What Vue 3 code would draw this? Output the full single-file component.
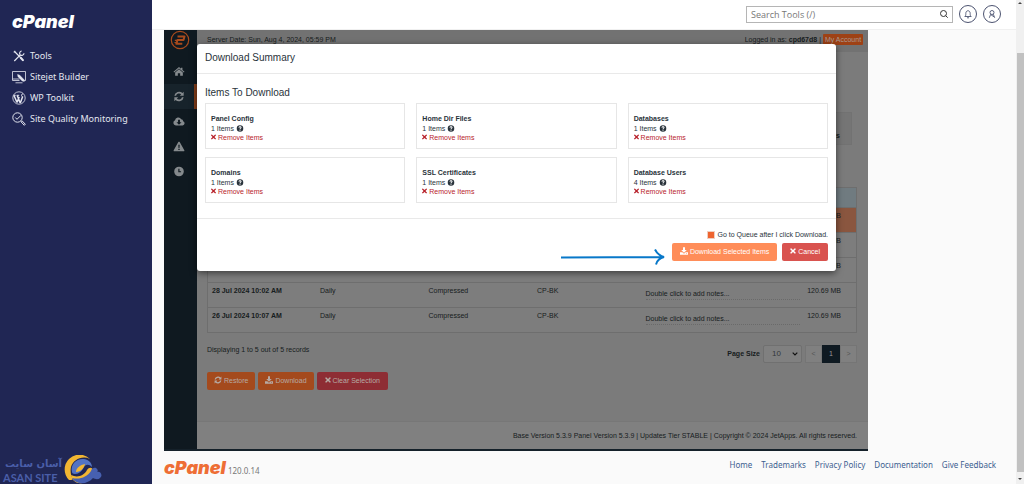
<script setup>
import { h, ref } from 'vue'

const shapes = {
  times: { box: '0 0 352 512', d: 'M242.72 256l100.07-100.07c12.28-12.28 12.28-32.19 0-44.48l-22.24-22.24c-12.28-12.28-32.19-12.28-44.48 0L176 189.28 75.93 89.21c-12.28-12.28-32.19-12.28-44.48 0L9.21 111.45c-12.28 12.28-12.28 32.19 0 44.48L109.28 256 9.21 356.07c-12.28 12.28-12.28 32.19 0 44.48l22.24 22.24c12.28 12.28 32.2 12.28 44.48 0L176 322.72l100.07 100.07c12.28 12.28 32.2 12.28 44.48 0l22.24-22.24c12.28-12.28 12.28-32.19 0-44.48L242.72 256z' },
  home: { box: '0 0 16 16', d: 'M8 1.5l2.8 2.4V2.5h2.2v3.3l3 2.6-.9 1.1L8 3.6.9 9.5 0 8.4zM8 4.7l5.6 4.7v4.9H9.7v-3.9H6.3v3.9H2.4V9.4z' },
  sync: { box: '0 0 16 16', d: 'M1.2 7A7 7 0 0 1 13 3l1.8-1.8v5.6H9.2l2-2A4.6 4.6 0 0 0 3.7 7zM14.8 9A7 7 0 0 1 3 13l-1.8 1.8V9.2h5.6l-2 2A4.6 4.6 0 0 0 12.3 9z' },
  cloud: { box: '0 0 18 16', d: 'M4.3 14A4 4 0 0 1 3 6.300A5 5 0 0 1 12.300 4.500A3.300 3.300 0 0 1 15.300 7.500A3.400 3.400 0 0 1 14.500 14zM7.600 5.500V9H5.200L9 12.800 12.800 9H10.400V5.500z' },
  warning: { box: '0 0 16 16', d: 'M8 1c.5 0 .8.2 1 .6l6.700 11.900c.5.8 0 1.500-.9 1.500H1.200c-.9 0-1.400-.7-.9-1.500L7 1.600c.2-.4.5-.6 1-.6zM7 5.500l.3 4.500h1.400L9 5.500zM7 11.200v1.900h2v-1.900z' },
  clock: { box: '0 0 16 16', d: 'M8 1a7 7 0 1 1 0 14A7 7 0 0 1 8 1zM7 4v5h4V7.500H8.700V4z' },
  help: { box: '0 0 16 16', d: 'M8 .5a7.500 7.500 0 1 1 0 15 7.500 7.500 0 0 1 0-15zM4.700 6.200h2.200c0-1.500 2.200-1.200 2.200 0 0 .9-2.200 1.300-2.200 3.500h2.200c0-1.300 2.400-1.700 2.400-3.800 0-3.700-6.800-3.900-6.800.3zM6.900 10.700V13h2.200v-2.300z' },
  download: { box: '0 0 16 16', d: 'M6 .5h4V6h3.500L8 11.500 2.500 6H6zM0 10.500h4.700L8 13.700l3.300-3.200H16v5H0zM12 12.500v1h2v-1z' },
}
const Icon = (props) =>
  h('svg', { class: 'icon', viewBox: shapes[props.name].box, 'aria-hidden': 'true' }, [
    h('path', { d: shapes[props.name].d, fill: 'currentColor', 'fill-rule': 'evenodd' }),
  ])
Icon.props = ['name']

const rail = ['home', 'sync', 'cloud', 'warning', 'clock']
const items = [
  { name: 'Panel Config', count: 1 },
  { name: 'Home Dir Files', count: 1 },
  { name: 'Databases', count: 1 },
  { name: 'Domains', count: 1 },
  { name: 'SSL Certificates', count: 1 },
  { name: 'Database Users', count: 4 },
]
const backups = [
  { selected: true },
  {},
  {},
  { date: '28 Jul 2024 10:02 AM', plan: 'Daily', kind: 'Compressed', node: 'CP-BK', notes: 'Double click to add notes...' },
  { date: '26 Jul 2024 10:07 AM', plan: 'Daily', kind: 'Compressed', node: 'CP-BK', notes: 'Double click to add notes...' },
]
const links = ['Home', 'Trademarks', 'Privacy Policy', 'Documentation', 'Give Feedback']
const goToQueue = ref(true)
</script>

<template>
  <div class="page">
    <aside class="sidebar">
      <a class="brand" href="#" aria-label="cPanel">cPanel</a>
      <nav class="menu">
        <a href="#">
          <svg viewBox="0 0 14 14" fill="none" stroke="currentColor" stroke-width="1.200">
            <path d="M2.500 2.500l6 6 3 3.300M1.800 3.300l1.500-1.500" /><path d="M8.500 8.500l2.800 3.200" stroke-width="2" />
            <path d="M2.300 12l5.500-5.700M12 4.200a2.300 2.300 0 0 1-3.900 1.500A2.300 2.300 0 0 1 9.700 2" />
          </svg>
          Tools
        </a>
        <a href="#">
          <svg viewBox="0 0 14 14" fill="none" stroke="currentColor" stroke-width=".8">
            <path d="M7.500 10.500h-7v-9h13v9H12M3.500 12.800h7M.5 9h7" />
            <path d="M5.500 4.500l2 .5 4.200 4.300.6 2.200-2.200-.6L6 6.700z" fill="currentColor" stroke-width=".4" />
          </svg>
          Sitejet Builder
        </a>
        <a href="#">
          <svg viewBox="0 0 14 14" fill="none" stroke="currentColor">
            <circle cx="7" cy="7" r="6.200" stroke-width=".8" />
            <path d="M2 4.500l3 7M5.200 4.500l3 7.500M5 11.500l2.200-5.500M8.300 12l2.400-6.500" stroke-width="1.500" />
            <path d="M1.500 4.300h2.200M4.600 4.300h2.600M10.300 5.800c-1.300-1.500-.9-2.800.6-2.900" />
          </svg>
          WP Toolkit
        </a>
        <a href="#">
          <svg viewBox="0 0 14 14" fill="none" stroke="currentColor">
            <circle cx="5.500" cy="5.500" r="4.700" />
            <path d="M3.300 5.500l1.700 1.800L9 3.300" />
            <path d="M9 9.800l1-1 3.300 3.400-1 1.100z" />
          </svg>
          Site Quality Monitoring
        </a>
      </nav>
      <div class="watermark">
        <div class="wm-text"><span lang="fa" dir="rtl">آسان سایت</span><b>ASAN SITE</b></div>
        <svg viewBox="0 0 40 29" aria-hidden="true">
          <path d="M5 25A14 14 0 0 1 26 4C18 0 9 5 7 12c-1 5 0 9 2 12-1 1-2 1-4 1z" fill="#f2b632" />
          <path d="M8 17C6 9 13 3 20 4c6 1 8 5 8 8-3-3-6-3-8 0-2 4-5 7-9 7-2 0-3-1-3-2z" fill="#5273c4" />
          <path d="M12 17c0-4 4-7 9-8-1 4-4 8-9 8z" fill="#f2b632" />
          <path d="M7 20c6 3 13 1 16-5 2-3 5-3 6 0 1 6-4 12-11 13-5 1-10-2-11-8z" fill="#f2b632" />
          <path d="M8 23c8 2 15-1 19-7 1-4 5-4 6-2 1 1 1 2 0 3 4-1 6 4 3 6-2 2-5 1-7 0-5 6-16 8-21 0z" fill="#4760b0" />
        </svg>
      </div>
    </aside>

    <div class="main">
      <header class="topbar">
        <label class="search">
          <input type="search" placeholder="Search Tools (/)" aria-label="Search Tools" />
          <svg viewBox="0 0 10 10" fill="none" stroke="#333"><circle cx="4.500" cy="4.500" r="3" /><path d="M6.700 6.700l2 2" /></svg>
        </label>
        <button class="round" aria-label="Notifications">
          <svg viewBox="0 0 10 10" fill="none" stroke="currentColor" stroke-width=".9"><path d="M1.800 7.500c1-.8 1-1.500 1-3 0-3.700 4.400-3.700 4.400 0 0 1.500 0 2.200 1 3zM4 8.800h2" /></svg>
        </button>
        <button class="round" aria-label="Account">
          <svg viewBox="0 0 10 10" fill="none" stroke="currentColor" stroke-width=".9"><circle cx="5" cy="3.500" r="2" /><path d="M3.700 5.200L2.300 8.800M6.300 5.200l1.400 3.600M4 5.800l3 2" /></svg>
        </button>
      </header>

      <main class="content">
        <section class="app">
          <nav class="rail">
            <div class="logo">
              <svg viewBox="0 0 20 20" fill="none" stroke="#a84a1c">
                <circle cx="10" cy="10" r="8.700" stroke-width="1.200" />
                <path d="M7.500 6.500h7l-1 3.500H7.500L6.300 13.800h6" stroke-width="2" stroke-linejoin="round" /><path d="M4.800 10.300h4M4.500 12.500h3" stroke-width="1.200" />
              </svg>
            </div>
            <a v-for="name in rail" :key="name" href="#" :class="{ active: name === 'sync' }" :aria-label="name"><Icon :name="name" /></a>
          </nav>
          <div class="workspace">
            <div class="statusbar">
              <span>Server Date: Sun, Aug 4, 2024, 05:59 PM</span>
              <span class="who">Logged in as: <b>cpd67d8</b> | <button class="account">My Account</button></span>
            </div>
            <div class="body">
              <div class="tile">Settings</div>
              <table>
                <thead><tr><th v-for="n in 6" :key="n" scope="col"></th></tr></thead>
                <tbody>
                  <tr v-for="(row, i) in backups" :key="i" :class="{ selected: row.selected }">
                    <td><b>{{ row.date }}</b></td><td>{{ row.plan }}</td><td>{{ row.kind }}</td><td>{{ row.node }}</td>
                    <td><div v-if="row.notes" class="note">{{ row.notes }}</div></td>
                    <td>120.69 MB</td>
                  </tr>
                </tbody>
              </table>
              <div class="pager">
                <span class="count">Displaying 1 to 5 out of 5 records</span>
                <label for="size">Page Size</label>
                <div class="select"><select id="size"><option>10</option></select><svg viewBox="0 0 6 4"><path d="M.7.7L3 3 5.300.7" fill="none" stroke="#111" stroke-width="1.200" /></svg></div>
                <div class="pages"><button>&lt;</button><button class="current">1</button><button>&gt;</button></div>
              </div>
              <div class="actions">
                <button><Icon name="sync" /> Restore</button>
                <button><Icon name="download" /> Download</button>
                <button class="red"><Icon name="times" /> Clear Selection</button>
              </div>
            </div>
            <footer class="version">Base Version 5.3.9 Panel Version 5.3.9 | Updates Tier STABLE | Copyright © 2024 JetApps. All rights reserved.</footer>
          </div>

          <div class="modal" role="dialog" aria-labelledby="title">
            <h2 id="title">Download Summary</h2>
            <div class="modal-body">
              <h3>Items To Download</h3>
              <div class="cards">
                <article v-for="item in items" :key="item.name">
                  <b>{{ item.name }}</b>
                  <span>{{ item.count }} Items <Icon name="help" /></span>
                  <a href="#"><Icon name="times" /> Remove Items</a>
                </article>
              </div>
            </div>
            <div class="modal-foot">
              <label class="queue"><input v-model="goToQueue" type="checkbox" />Go to Queue after I click Download.</label>
              <div class="buttons">
                <svg class="arrow" viewBox="0 0 104 18" fill="none" stroke="#0878c9" stroke-width="2"><path d="M0 9.500L102 9M94 1.500c2 4 5 6.500 9 7.500-4 1-7 3.500-8 7.500" /></svg>
                <button class="go"><Icon name="download" /> Download Selected Items</button>
                <button class="cancel"><Icon name="times" /> Cancel</button>
              </div>
            </div>
          </div>
        </section>

        <footer class="pagefoot">
          <a class="brand orange" href="#">cPanel</a><span class="ver">120.0.14</span>
          <nav><a v-for="link in links" :key="link" href="#">{{ link }}</a></nav>
        </footer>
      </main>
    </div>
    <div class="scrollbar" aria-hidden="true"><i class="up"></i><div class="thumb"></div><i class="down"></i></div>
  </div>
</template>

<style>
body { background: #fafafa; }
</style>

<style scoped>
* { box-sizing: border-box; }
a { color: inherit; text-decoration: none; }
button { font: inherit; border: 0; padding: 0; cursor: pointer; color: inherit; background: none; white-space: nowrap; }
h2, h3 { margin: 0; font-weight: 400; }
.page { display: grid; grid-template-columns: 152px 1fr 8px; min-height: 100vh; font-family: "Noto Sans", "Open Sans", sans-serif; font-size: 9px; overflow: hidden; }
.sidebar { background: #202654; color: #e4e6f0; display: flex; flex-direction: column; }
.brand { font: italic 900 18px/20px Inter, Roboto, sans-serif; color: #fff; }
.sidebar .brand { margin: 12px 0 0 12px; }
.menu { display: flex; flex-direction: column; margin-top: 13px; padding-left: 12px; }
.menu a { display: flex; align-items: center; gap: 4px; height: 21px; }
.menu svg { width: 14px; height: 14px; flex: none; }
.watermark { margin-top: auto; display: flex; align-items: flex-end; color: #4a5ea8; height: 29px; padding-left: 3px; }
.wm-text { display: flex; flex-direction: column; width: 59px; }
.wm-text span { font: 700 10px/14px "DejaVu Sans", sans-serif; white-space: nowrap; }
.wm-text b { font: 700 11px/13px Lato, sans-serif; white-space: nowrap; }
.watermark svg { width: 40px; height: 29px; flex: none; margin-left: 2px; }

.main { display: flex; flex-direction: column; min-width: 0; }
.topbar { height: 30px; background: #fff; border-bottom: 1px solid #f0f0f0; display: flex; align-items: center; justify-content: flex-end; gap: 6px; padding: 0 15px 1px 0; }
.search { width: 207px; height: 17px; border: 1px solid #b5b5b5; display: flex; align-items: center; padding: 0 3px 0 4px; background: #fff; }
.search input { flex: 1; min-width: 0; border: 0; outline: 0; padding: 0; font: 9px/13px "Open Sans", "Noto Sans", sans-serif; }
.search input::placeholder { color: #777; opacity: 1; }
.search svg { width: 10px; height: 10px; }
.round { width: 18px; height: 18px; border: 1px solid #4c5370; border-radius: 50%; color: #4c5370; display: grid; place-items: center; }
.round svg { width: 10px; height: 10px; }
.content { flex: 1; background: #fafafa; padding-left: 12px; }

.app { position: relative; display: flex; margin-right: 148px; font: 7px/10px "Liberation Sans", Arial, sans-serif; color: #171c20; border-bottom: 2px solid #15212a; }
.rail { width: 33px; background: #0f1920; display: flex; flex-direction: column; }
.rail .logo { height: 29px; padding-left: 6px; }
.rail .logo svg { width: 20px; height: 20px; display: block; }
.rail a { height: 25px; display: grid; place-items: center; padding-right: 4px; color: #858a8d; }
.rail a.active { background: #17232b; border-right: 3px solid #843d19; padding-right: 1px; }
.rail .icon { width: 12px; height: 11px; }
.icon { width: 8px; height: 8px; flex: none; display: inline-block; vertical-align: -1px; }
.workspace { flex: 1; min-width: 0; background: #7b7b7b; display: flex; flex-direction: column; }
.statusbar { height: 22px; background: #727272; display: flex; justify-content: space-between; align-items: flex-start; padding: 5px 5px 0 10px; }
.who { display: flex; gap: 2px; }
.account { background: #9e4115; color: #a99b93; height: 11px; width: 40px; margin-top: -1px; border-radius: 1px; }
.body { padding: 60px 11px 0 10px; height: 369px; }
.tile { width: 90px; height: 33px; margin: 0 5px 42px auto; background: #757575; border: 1px solid #727272; padding: 18px 11px 0 0; text-align: right; font-weight: 700; }
table { width: 100%; border-collapse: collapse; table-layout: fixed; border: 1px solid #6e6e6e; background: #7d7d7d; }
th { height: 20px; background: #707b80; padding: 0; }
td { height: 25px; padding: 3px 4px; border-top: 1px solid #6e6e6e; vertical-align: top; }
th:nth-child(5) { width: 162px; }
th:last-child { width: 53px; }
td:last-child { padding-right: 15px; padding-left: 0; text-align: right; }
td:nth-child(5) { padding: 6px 4px 0; }
tr.selected td { background: #8a563f; }
.note { border-bottom: 1px dotted #6a6a6a; }
.pager { display: flex; align-items: center; margin-top: 12px; height: 18px; }
.count { margin-right: auto; margin-bottom: 8px; }
.pager label { font-weight: 700; margin-right: 3px; }
.select { position: relative; width: 39px; height: 18px; }
.select select { appearance: none; width: 100%; height: 100%; padding: 0 0 0 8px; border: 1px solid #707070; border-radius: 2px; background: #808080; font: 8px/10px "Liberation Sans", Arial, sans-serif; color: #33383c; }
.select svg { position: absolute; right: 4px; top: 7px; width: 6px; height: 4px; pointer-events: none; }
.pages { display: flex; margin-left: 3px; }
.pages button { width: 17px; height: 18px; border: 1px solid #757575; background: #808080; color: #555; }
.pages .current { background: #0f1a22; border-color: #0f1a22; color: #999; width: 18px; }
.actions { display: flex; gap: 3px; margin-top: 9px; }
.actions button { height: 18px; padding: 0 7px; background: #a44a1d; color: #b6aaa4; border-radius: 2px; }
.actions .red { background: #8e2d34; padding: 0 8px; }
.version { height: 28px; padding: 9px 11px 0 0; text-align: right; background: #808080; white-space: nowrap; border-top: 1px solid #777; }

.modal { position: absolute; top: 14px; left: 33px; right: 32px; background: #fff; border-radius: 3px; color: #29333b; box-shadow: 0 2px 7px #0008; }
.modal h2 { font-size: 10px; line-height: 12px; padding: 8px 8px 9px; border-bottom: 1px solid #e9e9e9; }
.modal-body { padding: 13px 8px 15px; }
.modal h3 { font-size: 10px; line-height: 12px; margin-bottom: 4px; }
.cards { display: grid; grid-template-columns: repeat(3, 1fr); gap: 8px 11px; }
article { border: 1px solid #e6e6e6; height: 46px; padding: 9px 5px 0; display: flex; flex-direction: column; line-height: 10px; align-items: flex-start; }
article b { line-height: 11px; }
article span { line-height: 9px; }
article .icon { height: 7px; }
article a { color: #b8232c; }
article a .icon { width: 5px; height: 8px; }
.modal-foot { border-top: 1px solid #e9e9e9; padding: 11px 8px 10px; display: flex; flex-direction: column; align-items: flex-end; gap: 3px; }
.queue { display: flex; align-items: center; gap: 3px; }
.queue input { appearance: none; margin: 0; width: 8px; height: 8px; border: 1px solid #f0cfc0; background: #fff; }
.queue input:checked { background: #ee642f; }
.buttons { position: relative; display: flex; gap: 5px; }
.buttons button { height: 18px; padding: 0 8px; color: #fff; border-radius: 2px; }
.go { background: #ff8d59; }
.buttons .cancel { background: #d9534f; }
.arrow { position: absolute; right: 100%; top: 5px; width: 104px; height: 18px; margin-right: 7px; }
.red .icon, .cancel .icon { width: 6px; }

.pagefoot { display: flex; align-items: center; padding: 2px 20px 0 0; height: 32px; }
.brand.orange { color: #ee6e35; }
.ver { font-size: 8px; color: #777; margin-left: 2px; padding-top: 4px; }
.pagefoot nav { margin-left: auto; display: flex; gap: 9px; color: #3c6090; padding-bottom: 7px; font-size: 8px; }
.scrollbar { background: #f0f0f0; display: flex; flex-direction: column; align-items: center; padding: 2px 0 4px; }
.scrollbar i { border: 2px solid transparent; }
.scrollbar .up { border-bottom-color: #444; border-top: 0; margin-bottom: 49px; }
.scrollbar .down { border-top-color: #444; border-bottom: 0; margin-top: 6px; }
.thumb { flex: 1; width: 7px; background: #c1c1c1; }
</style>
